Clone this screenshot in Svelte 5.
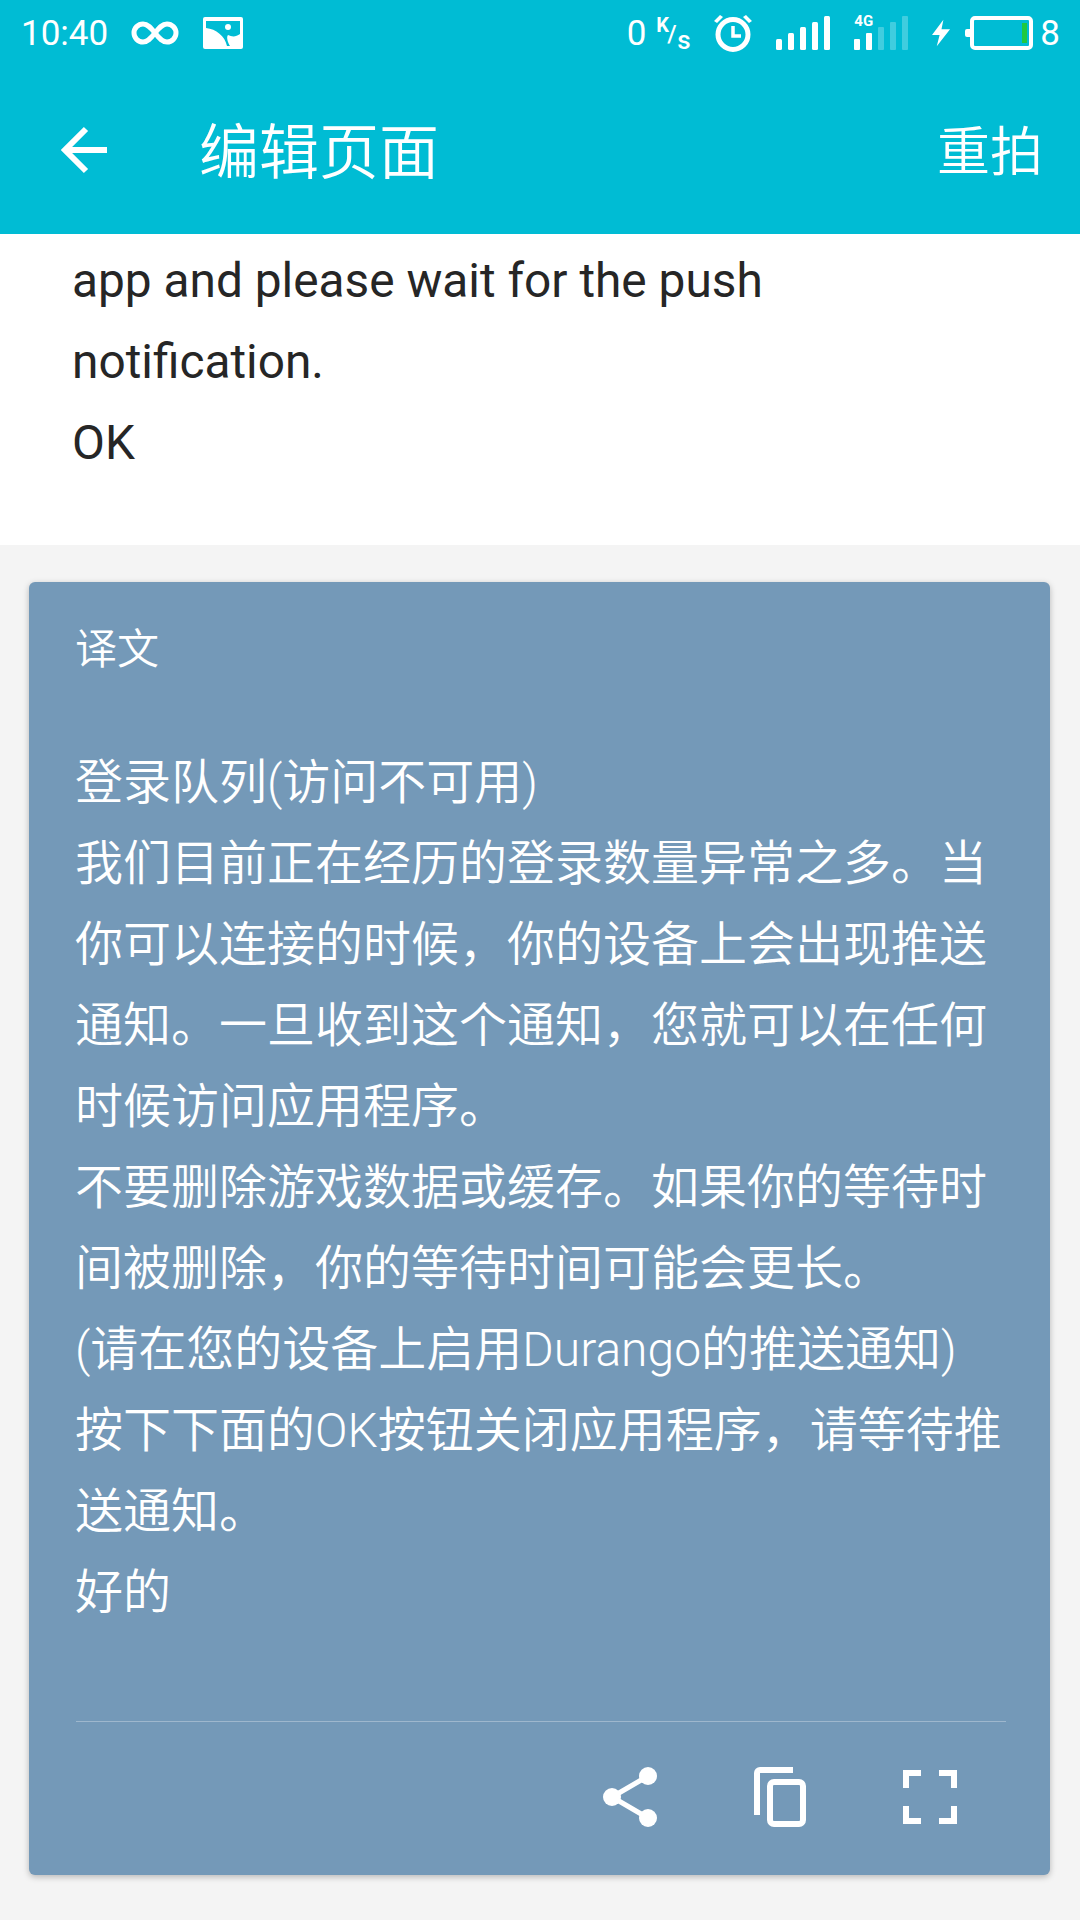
<script>
  const paragraphs = [
    '登录队列(访问不可用)',
    '我们目前正在经历的登录数量异常之多。当你可以连接的时候，你的设备上会出现推送通知。一旦收到这个通知，您就可以在任何时候访问应用程序。',
    '不要删除游戏数据或缓存。如果你的等待时间被删除，你的等待时间可能会更长。',
    '(请在您的设备上启用Durango的推送通知)',
    '按下下面的OK按钮关闭应用程序，请等待推送通知。',
    '好的'
  ];
</script>

<div class="page">
  <header class="top">
    <div class="status">
      <div class="left">
        <span class="time">10:40</span>
        <svg class="inf" width="48" height="26" viewBox="0 0 48 26"><path d="M24 13c-4-5-7-9-12-9a9 9 0 0 0 0 18c5 0 8-4 12-9s7-9 12-9a9 9 0 0 1 0 18c-5 0-8-4-12-9z" fill="none" stroke="#fff" stroke-width="5"/></svg>
        <svg class="pic" width="40" height="32" viewBox="0 0 40 32"><rect width="40" height="32" rx="2" fill="#fff"/><path d="M3 4h34v13c-4 3-8 3-12 1-2 2 0 8 2 11h-3C22 19 13 12 3 11z" fill="#00bcd4"/><circle cx="25" cy="10" r="3" fill="#fff"/></svg>
      </div>
      <div class="right">
        <span class="zero">0</span>
        <span class="speed"><i>K</i><b>/</b><em>s</em></span>
        <svg class="alarm" width="38" height="38" viewBox="0 0 38 38"><circle cx="19" cy="20.500" r="15" fill="none" stroke="#fff" stroke-width="5"/><path d="M19 12v10h8" fill="none" stroke="#fff" stroke-width="3.500"/><path d="M0 7l6-6 3 2-6 6zM38 7l-6-6-3 2 6 6z" fill="#fff"/></svg>
        <svg class="sig" width="54" height="34" viewBox="0 0 54 34"><rect x="0" y="23" width="6" height="11" rx="1.500"/><rect x="12" y="17" width="6" height="17" rx="1.500"/><rect x="24" y="11" width="6" height="23" rx="1.500"/><rect x="36" y="6" width="6" height="28" rx="1.500"/><rect x="48" y="0" width="6" height="34" rx="1.500"/></svg>
        <div class="sig2">
          <span class="g4">4G</span>
          <svg width="54" height="34" viewBox="0 0 54 34"><rect x="0" y="23" width="6" height="11" rx="1" fill="#fff"/><rect x="12" y="17" width="6" height="17" rx="1" fill="#fff"/><rect x="24" y="11" width="6" height="23" rx="1" fill="#fff" opacity=".25"/><rect x="36" y="6" width="6" height="28" rx="1" fill="#fff" opacity=".25"/><rect x="48" y="0" width="6" height="34" rx="1" fill="#fff" opacity=".25"/></svg>
        </div>
        <svg class="bolt" width="19" height="28" viewBox="0 0 20 28"><path d="M12 0L0 16h8l-3 12L19 10h-9z" fill="#fff"/></svg>
        <div class="batt"><span class="nub"></span><span class="cell"><span class="lvl"></span></span></div>
        <span class="eight">8</span>
      </div>
    </div>
    <div class="bar">
      <svg class="back" width="48" height="48" viewBox="0 0 48 48"><path d="M47 24H6M26 3L5 24l21 21" fill="none" stroke="#fff" stroke-width="6"/></svg>
      <span class="title">编辑页面</span>
      <span class="retake">重拍</span>
    </div>
  </header>

  <section class="source">
    <p>app and please wait for the push<br />notification.<br />OK</p>
  </section>

  <section class="body">
    <article class="card">
      <h2>译文</h2>
      <div class="text">
        {#each paragraphs as p}
          <p>{p}</p>
        {/each}
      </div>
      <div class="rule"></div>
      <div class="actions">
        <svg width="54" height="60" viewBox="0 0 54 60"><path d="M45 9L9 30l36 21" fill="none" stroke="#fff" stroke-width="5"/><circle cx="45" cy="9" r="9" fill="#fff"/><circle cx="9" cy="30" r="9" fill="#fff"/><circle cx="45" cy="51" r="9" fill="#fff"/></svg>
        <svg width="52" height="60" viewBox="0 0 52 60"><path d="M39 3H6a3 3 0 0 0-3 3v42" fill="none" stroke="#fff" stroke-width="6"/><rect x="16" y="15" width="33" height="42" rx="4" fill="none" stroke="#fff" stroke-width="6"/></svg>
        <svg width="54" height="54" viewBox="0 0 54 54"><path d="M3 18V3h15M36 3h15v15M51 36v15H36M18 51H3V36" fill="none" stroke="#fff" stroke-width="6"/></svg>
      </div>
    </article>
  </section>
</div>

<style>
  :global(body) { margin: 0; background: #f4f4f4; }
  .page { width: 1080px; height: 1920px; display: flex; flex-direction: column; overflow: hidden; font-family: Roboto, "Noto Sans CJK SC", sans-serif; }
  .top { background: #00bcd4; height: 234px; color: #fff; flex: none; }
  .status { height: 66px; display: flex; justify-content: space-between; align-items: center; padding: 0 20px 0 21px; }
  .left, .right { display: flex; align-items: center; }
  .time { font-size: 35px; font-weight: 400; margin-right: 23px; }
  .pic { margin-left: 24px; }
  .zero { font-size: 35px; }
  .speed { position: relative; width: 34px; height: 40px; margin: 0 24px 0 10px; }
  .speed i, .speed b, .speed em { position: absolute; font-style: normal; line-height: 1; }
  .speed i { left: 0; top: 2px; font-size: 20px; font-weight: 700; }
  .speed b { left: 11px; top: 9px; font-size: 24px; font-weight: 500; }
  .speed em { left: 21px; top: 14px; font-size: 26px; font-weight: 500; }
  .sig { fill: #fff; margin-left: 24px; }
  .sig2 { position: relative; margin-left: 24px; height: 34px; }
  .sig2 svg { display: block; }
  .g4 { position: absolute; left: 0; top: -2px; font-size: 15px; font-weight: 700; line-height: 1; }
  .bolt { margin-left: 24px; }
  .batt { display: flex; align-items: center; margin-left: 14px; }
  .nub { width: 5px; height: 8px; background: #fff; border-radius: 2px 0 0 2px; }
  .cell { box-sizing: border-box; width: 63px; height: 34px; border: 4px solid #fff; border-radius: 5px; display: block; position: relative; }
  .lvl { position: absolute; right: 2px; top: 3px; bottom: 3px; width: 5px; background: #1fc93f; }
  .eight { font-size: 35px; margin-left: 7px; }
  .bar { height: 168px; display: flex; align-items: center; padding: 0 37px 0 60px; }
  .title { font-size: 60px; font-weight: 350; margin: 0 0 6px 91px; flex: 1; }
  .retake { font-size: 53px; font-weight: 350; margin-bottom: 5px; }
  .source { background: #fff; height: 311px; flex: none; padding: 7px 72px 0; box-sizing: border-box; color: #262626; font-size: 47.8px; font-weight: 400; }
  .source p { margin: 0; line-height: 81px; }
  .body { flex: 1; padding: 37px 30px 45px 29px; display: flex; }
  .card { flex: 1; box-sizing: border-box; background: #7499b8; border-radius: 6px; box-shadow: 0 2px 6px rgba(0,0,0,.25); padding: 0 44px 0 46px; color: #fff; display: flex; flex-direction: column; }
  h2 { margin: 44px 0 0; font-size: 42px; font-weight: 350; line-height: 48px; }
  .text { margin-top: 68px; font-size: 48px; line-height: 81px; font-weight: 350; flex: 1; margin-right: -8px; }
  .text p { margin: 0; }
  .rule { height: 1px; background: rgba(255,255,255,.3); margin-left: 1px; }
  .actions { height: 150px; padding-bottom: 3px; display: flex; justify-content: flex-end; align-items: center; gap: 97px; padding-right: 49px; }
</style>
